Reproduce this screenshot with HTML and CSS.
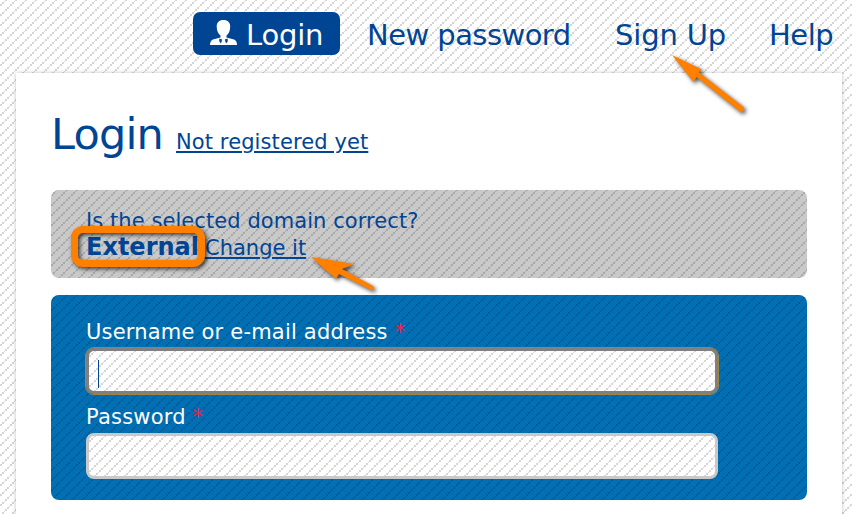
FILE: index.html
```html
<!DOCTYPE html>
<html lang="en">
<head>
<meta charset="utf-8">
<title>Login</title>
<link rel="stylesheet" href="styles.css">
</head>
<body>
<div class="page stripes">
<nav class="nav">
<a class="tab active"><svg class="user" viewBox="0 0 27 26"><path d="M13.400 0C9 0 6.700 2.500 6.700 6.500c0 4 1.500 7.500 3.800 9v2L3 19.500Q0 20.500 0 25H27Q27 20.500 24 19.500l-7.500-2v-2c2.300-1.500 3.700-5 3.700-9C20.200 2.500 17.800 0 13.400 0z" fill="#fff"/><path d="M9.300 18.500v3l1.700 2 1.200-4zM17.700 18.500v3l-1.700 2-1.200-4z" fill="#004494"/></svg><span class="t-login">Login</span></a>
<a class="tab t-new">New password</a>
<a class="tab t-sign">Sign Up</a>
<a class="tab t-help">Help</a>
</nav>
<main class="card">
<header class="head"><h1>Login</h1><a class="register">Not registered yet</a></header>
<section class="domain stripes">
<p class="question">Is the selected domain correct?</p>
<p class="choice"><strong>External</strong><a>Change it</a></p>
</section>
<form class="form stripes">
<label for="user">Username or e-mail address <em>*</em></label>
<div class="field focused stripes" id="user"><span class="caret"></span></div>
<label for="pass">Password <em>*</em></label>
<div class="field stripes" id="pass"></div>
</form>
</main>
<div class="ring"></div>
<svg class="arrows" viewBox="0 0 852 514"><g fill="#ff8000"><path d="M672 55L702 69.500 698.500 72 743.500 107Q745 112 740.500 112L696.500 77 693.500 82Z"/><path d="M311 257L354 264 342 269 373 286Q376 290 371 290L339 274 336 279Z"/></g></svg>
</div>
</body>
</html>
```
FILE: styles.css
```css
* { box-sizing: border-box; }
body { margin: 0; color: #004494; font-family: "DejaVu Sans", sans-serif; }
.page { position: relative; width: 852px; height: 514px; overflow: hidden; }
.stripes {
  --block: conic-gradient(from 270deg at 2px 2px, rgba(0,0,0,.16) 90deg, transparent 0);
  --dot: conic-gradient(from 270deg at 1px 1px, rgba(0,0,0,.16) 90deg, transparent 0);
  background-image: var(--block), var(--block), var(--dot), var(--block), var(--block), var(--dot);
  background-size: 10px 10px;
  background-position: 0 4px, 2px 2px, 4px 1px, 5px 9px, 7px 7px, 9px 6px;
}
.nav { display: flex; height: 73px; padding: 12px 0 18px 193px; font-size: 29px; }
.tab { height: 43px; line-height: 47px; white-space: nowrap; }
.active { display: flex; width: 147px; padding-left: 17px; border-radius: 7px; background: #004494; color: #fff; margin-right: 27px; letter-spacing: -.2px; }
.user { width: 27px; height: 26px; margin: 8px 9px 0 0; }
.t-new { width: 248px; letter-spacing: -.55px; }
.t-sign { width: 154px; letter-spacing: -.15px; }
.t-help { letter-spacing: -.5px; }
.card { width: 826px; height: 460px; margin-left: 16px; padding: 0 35px; background: #fff; box-shadow: 0 0 4px rgba(0,0,0,.25); }
.head { display: flex; align-items: baseline; height: 117px; padding-top: 35px; }
h1 { width: 125px; margin: 0; font-size: 43px; line-height: 52px; font-weight: 400; letter-spacing: -.8px; }
.register { font-size: 21px; text-decoration: underline; white-space: nowrap; letter-spacing: .1px; }
.domain { height: 88px; padding: 18px 35px; border-radius: 8px; background-color: #c9c9c9; font-size: 21px; }
.domain p { margin: 0; height: 26px; line-height: 26px; white-space: nowrap; }
.domain .question { letter-spacing: .07px; }
.choice { display: flex; }
.choice strong { width: 119px; font-size: 24px; }
.choice a { line-height: 28px; text-decoration: underline; }
.form { height: 205px; margin-top: 17px; padding: 23px 35px; border-radius: 8px; background-color: #006fb4; color: #fff; font-size: 21px; }
label { display: block; height: 30px; line-height: 28px; white-space: nowrap; letter-spacing: .2px; }
label em { color: #f02040; font-style: normal; }
.field { width: 632px; height: 46px; border: 3px solid #c9c9c9; border-radius: 8px; background-color: #fff; }
.focused { border-color: #808080; margin-bottom: 9px; padding: 9px; outline: 1px solid #a18440; }
.caret { display: block; width: 1px; height: 28px; background: #004494; }
.ring { position: absolute; left: 71px; top: 226px; width: 134px; height: 41px; border: 7px solid #ff8000; border-radius: 12px; filter: drop-shadow(2px 2px 2px rgba(0,0,0,.7)); }
.arrows { position: absolute; left: 0; top: 0; width: 852px; height: 514px; filter: drop-shadow(2px 2px 2px rgba(0,0,0,.7)); }
```
